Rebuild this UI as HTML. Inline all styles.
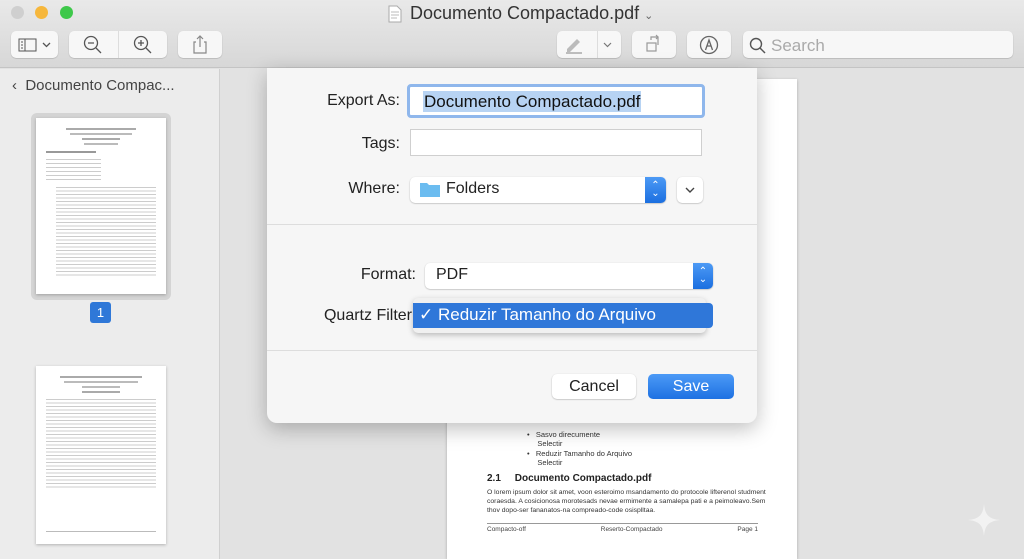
<!DOCTYPE html>
<html><head><meta charset="utf-8"><style>
*{margin:0;padding:0;box-sizing:border-box}
body{width:1024px;height:559px;overflow:hidden;font-family:"Liberation Sans",Arial,sans-serif;background:#e2e2e2;position:relative;color:#222}
.abs{position:absolute}
.top{left:0;top:0;width:1024px;height:68px;background:linear-gradient(#e9e9e9,#d7d7d7);border-bottom:1px solid #c4c4c4}
.dot{width:13px;height:13px;border-radius:50%;top:6px}
.btn{background:#f7f7f7;border-radius:5px;box-shadow:0 0.5px 1px rgba(0,0,0,.25);height:27px;top:31px}
.side{left:0;top:69px;width:220px;height:490px;background:#ececec;border-right:1px solid #d0d0d0}
.pg{background:#fff;box-shadow:0 1px 3px rgba(0,0,0,.25)}
.dlg{left:267px;top:68px;width:490px;height:355px;background:#f6f6f6;border-radius:0 0 10px 10px;box-shadow:0 6px 20px rgba(0,0,0,.25)}
.lbl{font-size:16px;text-align:right;color:#222}
.fld{background:#fff;border:1px solid #cfcfcf}
.pop{background:#fff;border-radius:5px;box-shadow:0 0.5px 1.5px rgba(0,0,0,.3)}
.step{background:linear-gradient(#4d9af5,#1b6fe0);border-radius:0 5px 5px 0;color:#fff;font-size:10px;text-align:center;line-height:8px;padding-top:5px}
.doc{font-size:7.5px;color:#333}
</style></head><body>
<div class="abs top"></div>
<div class="abs dot" style="left:11px;background:#cfcfcf"></div>
<div class="abs dot" style="left:35px;background:#f6b73c"></div>
<div class="abs dot" style="left:60px;background:#3ec84a"></div>
<svg class="abs" style="left:388px;top:5px" width="14" height="18"><path d="M1 1h8l4 4v12H1z" fill="#fff" stroke="#aaa"/><path d="M3 7h8M3 10h8M3 13h6" stroke="#bbb"/></svg>
<div class="abs" style="left:410px;top:3px;font-size:18px;color:#333">Documento Compactado.pdf <span style="font-size:11px;color:#666">&#8964;</span></div>
<div class="abs btn" style="left:11px;width:47px"></div>
<svg class="abs" style="left:18px;top:38px" width="36" height="14"><rect x="1" y="1" width="17" height="12" fill="none" stroke="#555"/><path d="M7 1v12M3 4h2M3 7h2M3 10h2" stroke="#555"/><path d="M25 5l3.5 3.5L32 5" fill="none" stroke="#555" stroke-width="1.3"/></svg>
<div class="abs btn" style="left:69px;width:98px"></div>
<div class="abs" style="left:118px;top:31px;width:1px;height:27px;background:#ddd"></div>
<svg class="abs" style="left:83px;top:35px" width="20" height="20"><circle cx="8" cy="8" r="6.5" fill="none" stroke="#555" stroke-width="1.3"/><path d="M5 8h6M13 13l5 5" stroke="#555" stroke-width="1.3"/></svg>
<svg class="abs" style="left:133px;top:35px" width="20" height="20"><circle cx="8" cy="8" r="6.5" fill="none" stroke="#555" stroke-width="1.3"/><path d="M5 8h6M8 5v6M13 13l5 5" stroke="#555" stroke-width="1.3"/></svg>
<div class="abs btn" style="left:178px;width:44px"></div>
<svg class="abs" style="left:191px;top:34px" width="18" height="20"><path d="M5 8H3v11h12V8h-2M9 13V2M6 5l3-3 3 3" fill="none" stroke="#888" stroke-width="1.2"/></svg>
<div class="abs btn" style="left:557px;width:64px"></div>
<div class="abs" style="left:597px;top:31px;width:1px;height:27px;background:#ddd"></div>
<svg class="abs" style="left:564px;top:36px" width="52" height="18"><path d="M3 13l10-10 3 3-10 10H3z" fill="#bbb"/><path d="M2 17h16" stroke="#aaa" stroke-width="1.5"/><path d="M40 7l3.5 3.5L47 7" fill="none" stroke="#777" stroke-width="1.2"/></svg>
<div class="abs btn" style="left:632px;width:44px"></div>
<svg class="abs" style="left:644px;top:34px" width="20" height="20"><rect x="3" y="9" width="9" height="8" fill="none" stroke="#999" stroke-width="1.2"/><path d="M7 6V3h7v8M12 1l2 2-2 2" fill="none" stroke="#999" stroke-width="1.2"/></svg>
<div class="abs btn" style="left:687px;width:44px"></div>
<svg class="abs" style="left:699px;top:35px" width="20" height="20"><circle cx="10" cy="10" r="8.5" fill="none" stroke="#666" stroke-width="1.3"/><path d="M6.5 15L10 5l3.5 10M8 11h4" fill="none" stroke="#666" stroke-width="1.3"/></svg>
<div class="abs btn" style="left:743px;width:270px"></div>
<svg class="abs" style="left:749px;top:37px" width="18" height="18"><circle cx="7" cy="7" r="5.5" fill="none" stroke="#555" stroke-width="1.4"/><path d="M11 11l5 5" stroke="#555" stroke-width="1.5"/></svg>
<div class="abs" style="left:771px;top:36px;font-size:17px;color:#aaa">Search</div>
<div class="abs side"></div>
<div class="abs" style="left:12px;top:77px;font-size:15px;color:#444">&lsaquo;&nbsp;&nbsp;Documento Compac...</div>
<div class="abs" style="left:31px;top:113px;width:140px;height:187px;background:#d4d4d4;border-radius:6px"></div>
<div class="abs pg" style="left:36px;top:118px;width:130px;height:176px"></div>
<div class="abs" style="left:36px;top:118px;width:130px;height:176px;padding:10px 10px">
<div style="height:2px;background:#aaa;margin:0 20px 3px"></div><div style="height:2px;background:#bbb;margin:0 24px 3px"></div><div style="height:2px;background:#aaa;margin:0 36px 3px"></div><div style="height:2px;background:#bbb;margin:0 38px 6px"></div>
<div style="height:2px;background:#999;width:50px;margin-bottom:6px"></div>
<div style="height:22px;background:repeating-linear-gradient(#ccc 0 1px,transparent 1px 4px);width:55px;margin-bottom:6px"></div>
<div style="height:90px;background:repeating-linear-gradient(#ccc 0 1px,transparent 1px 3.5px);margin-left:10px"></div>
</div>
<div class="abs" style="left:90px;top:302px;width:21px;height:21px;background:#2f78d8;border-radius:3px;color:#fff;font-size:13px;text-align:center;line-height:21px">1</div>
<div class="abs pg" style="left:36px;top:366px;width:130px;height:178px"></div>
<div class="abs" style="left:46px;top:376px;width:110px">
<div style="height:2px;background:#aaa;margin:0 14px 3px"></div><div style="height:2px;background:#bbb;margin:0 18px 3px"></div><div style="height:2px;background:#bbb;margin:0 36px 3px"></div><div style="height:2px;background:#aaa;margin:0 36px 6px"></div>
<div style="height:90px;background:repeating-linear-gradient(#ccc 0 1px,transparent 1px 3.5px)"></div>
</div>
<div class="abs" style="left:46px;top:531px;width:110px;height:1px;background:#bbb"></div>
<div class="abs pg" style="left:447px;top:79px;width:350px;height:480px"></div>
<div class="abs doc" style="left:527px;top:430px;line-height:9px">&bull;&nbsp;&nbsp;&nbsp;Sasvo direcumente<br>&nbsp;&nbsp;&nbsp;&nbsp;&nbsp;Selectir</div>
<div class="abs doc" style="left:527px;top:449px;line-height:9px">&bull;&nbsp;&nbsp;&nbsp;Reduzir Tamanho do Arquivo<br>&nbsp;&nbsp;&nbsp;&nbsp;&nbsp;Selectir</div>
<div class="abs" style="left:487px;top:473px;font-size:10px;font-weight:bold;color:#222">2.1&nbsp;&nbsp;&nbsp;&nbsp;&nbsp;Documento Compactado.pdf</div>
<div class="abs" style="left:487px;top:488px;width:280px;line-height:9px;font-size:6.8px;color:#333">O lorem ipsum dolor sit amet, voon esteroimo msandamento do protocole lifterenol studment coraesda. A cosicionosa morotesads nevae ermimente a samalepa pati e a peimoleavo.Sem thov dopo-ser fananatos-na compreado-code osisplltaa.</div>
<div class="abs" style="left:487px;top:523px;width:271px;height:1px;background:#999"></div>
<div class="abs" style="left:487px;top:526px;width:271px;font-size:6.5px;color:#444;display:flex;justify-content:space-between"><span>Compacto-off</span><span>Reserto-Compactado</span><span>Page 1</span></div>
<div class="abs dlg"></div>
<div class="abs lbl" style="left:280px;top:92px;width:120px">Export As:</div>
<div class="abs" style="left:407px;top:84px;width:298px;height:34px;border:3px solid #8fb7ec;border-radius:4px;background:#fff"></div>
<div class="abs" style="left:423px;top:91px;height:21px;background:#b7d3f3;font-size:17px;color:#111;padding:0 1px;line-height:21px">Documento Compactado.pdf</div>
<div class="abs lbl" style="left:280px;top:135px;width:120px">Tags:</div>
<div class="abs fld" style="left:410px;top:129px;width:292px;height:27px"></div>
<div class="abs lbl" style="left:280px;top:180px;width:120px">Where:</div>
<div class="abs pop" style="left:410px;top:177px;width:256px;height:26px"></div>
<div class="abs step" style="left:645px;top:177px;width:21px;height:26px">&#8963;<br>&#8964;</div>
<svg class="abs" style="left:420px;top:181px" width="20" height="16"><path d="M0 2h7l2 2h11v12H0z" fill="#6bbcf0"/></svg>
<div class="abs" style="left:446px;top:180px;font-size:16px">Folders</div>
<div class="abs pop" style="left:677px;top:177px;width:26px;height:26px"></div>
<svg class="abs" style="left:684px;top:186px" width="12" height="8"><path d="M2 2l4 4 4-4" fill="none" stroke="#444" stroke-width="1.4"/></svg>
<div class="abs" style="left:267px;top:224px;width:490px;height:1px;background:#ddd"></div>
<div class="abs lbl" style="left:296px;top:266px;width:120px">Format:</div>
<div class="abs pop" style="left:425px;top:263px;width:288px;height:26px"></div>
<div class="abs step" style="left:693px;top:263px;width:20px;height:26px">&#8963;<br>&#8964;</div>
<div class="abs" style="left:436px;top:266px;font-size:16px">PDF</div>
<div class="abs lbl" style="left:290px;top:307px;width:122px">Quartz Filter</div>
<div class="abs" style="left:413px;top:298px;width:293px;height:35px;background:#f0f0f0;border-radius:5px;box-shadow:0 2px 6px rgba(0,0,0,.25)"></div>
<div class="abs" style="left:413px;top:303px;width:300px;height:25px;background:#2f77d9;border-radius:0 4px 4px 0"></div>
<div class="abs" style="left:419px;top:305px;font-size:17px;color:#fff">&#10003; Reduzir Tamanho do Arquivo</div>
<div class="abs" style="left:267px;top:350px;width:490px;height:1px;background:#ddd"></div>
<div class="abs pop" style="left:552px;top:374px;width:84px;height:25px;text-align:center;font-size:16px;line-height:25px">Cancel</div>
<div class="abs" style="left:648px;top:374px;width:86px;height:25px;border-radius:5px;background:linear-gradient(#4c9af6,#1e71e2);color:#fff;text-align:center;font-size:16px;line-height:25px">Save</div>
<svg class="abs" style="left:966px;top:502px" width="36" height="36"><path d="M18 2C19 13 23 17 34 18 23 19 19 23 18 34 17 23 13 19 2 18 13 17 17 13 18 2z" fill="#f2f2f2"/></svg>
</body></html>
